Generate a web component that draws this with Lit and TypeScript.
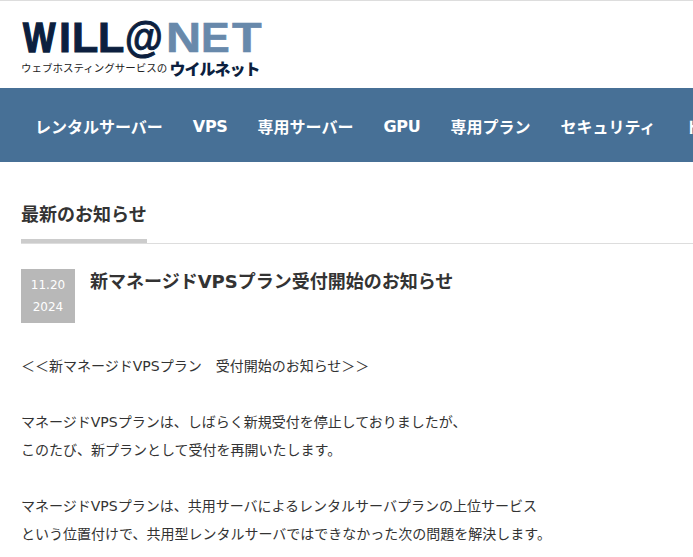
import { LitElement, html, css } from "lit";
import { customElement } from "lit/decorators.js";

const NAV = ["レンタルサーバー", "VPS", "専用サーバー", "GPU", "専用プラン", "セキュリティ", "ドメイン"];

@customElement("app-root")
export class AppRoot extends LitElement {
  static styles = css`
    :host {
      display: block;
      height: 557px;
      overflow: hidden;
      background: #fff;
      color: #333;
      font-family: "DejaVu Sans", "Noto Sans CJK JP", sans-serif;
      border-top: 1px solid #ddd;
      box-sizing: border-box;
    }
    .header { height: 87px; padding: 17px 0 0 23px; box-sizing: border-box; }
    .logo-main {
      display: flex;
      height: 38px;
      align-items: center;
      font-family: "Liberation Sans", sans-serif;
      font-weight: 700;
      font-size: 43px;
      line-height: 38px;
      white-space: nowrap;
    }
    .logo-main span { display: inline-block; transform-origin: left center; flex: none; }
    .d { color: #0c1f3f; -webkit-text-stroke: 1px #0c1f3f; }
    .l { color: #6889ab; -webkit-text-stroke: 0.6px #6889ab; }
    .w { width: 36px; transform: scaleX(0.8); -webkit-text-stroke-width: 1.5px; }
    .i { width: 13px; }
    .l1 { width: 26px; }
    .l2 { width: 27px; }
    .at { width: 41px; transform: scaleX(0.9); }
    .n { width: 35px; transform: scaleX(1.13); }
    .e { width: 31px; }
    .t { width: 30px; transform: scaleX(1.13); }
    .logo-sub {
      display: flex;
      align-items: flex-end;
      margin-top: 3px;
      margin-left: -2px;
      font-family: "Noto Sans CJK JP", sans-serif;
      font-size: 10.5px;
      line-height: 18px;
      color: #222;
      white-space: nowrap;
    }
    .logo-sub b { font-size: 16px; font-weight: 900; color: #0c1f3f; margin-left: 2px; letter-spacing: -1px; line-height: 18px; }
    nav {
      display: flex;
      gap: 30px;
      height: 74px;
      box-sizing: border-box;
      align-items: center;
      padding: 2px 0 0 35px;
      background: #477096;
      color: #fff;
      font-size: 16px;
      font-weight: 700;
      white-space: nowrap;
      overflow: hidden;
    }
    nav .lat { letter-spacing: -0.3px; }
    main { padding: 40px 0 0 21px; }
    h2 {
      margin: 0;
      font-size: 18px;
      font-weight: 700;
      line-height: 26px;
      height: 37px;
      color: #333;
    }
    .rule { height: 4px; border-bottom: 1px solid #ddd; }
    .rule div { width: 126px; height: 4px; background: #ccc; }
    .post { display: flex; gap: 15px; margin-top: 25px; }
    .date {
      width: 54px;
      height: 54px;
      background: #b8b8b8;
      color: #fff;
      font-size: 12px;
      line-height: 22px;
      text-align: center;
      padding-top: 5px;
      box-sizing: border-box;
      flex: none;
    }
    h1 { margin: 0; padding-top: 1px; font-size: 18px; font-weight: 700; line-height: 24px; color: #333; }
    .body { margin-top: 29px; font-size: 14px; line-height: 28px; color: #333; white-space: nowrap; }
    .body p { margin: 0 0 28px; }
  `;

  render() {
    return html`
      <div class="header">
        <div class="logo-main"><span class="d w">W</span><span class="d i">I</span><span class="d l1">L</span><span class="d l2">L</span><span class="d at">@</span><span class="l n">N</span><span class="l e">E</span><span class="l t">T</span></div>
        <div class="logo-sub">ウェブホスティングサービスの<b>ウイルネット</b></div>
      </div>
      <nav>${NAV.map((n) => html`<span class=${/^[A-Z]+$/.test(n) ? "lat" : ""}>${n}</span>`)}</nav>
      <main>
        <h2>最新のお知らせ</h2>
        <div class="rule"><div></div></div>
        <div class="post">
          <div class="date">11.20<br />2024</div>
          <h1>新マネージドVPSプラン受付開始のお知らせ</h1>
        </div>
        <div class="body">
          <p>＜＜新マネージドVPSプラン　受付開始のお知らせ＞＞</p>
          <p>マネージドVPSプランは、しばらく新規受付を停止しておりましたが、<br />このたび、新プランとして受付を再開いたします。</p>
          <p>マネージドVPSプランは、共用サーバによるレンタルサーバプランの上位サービス<br />という位置付けで、共用型レンタルサーバではできなかった次の問題を解決します。</p>
        </div>
      </main>
    `;
  }
}
